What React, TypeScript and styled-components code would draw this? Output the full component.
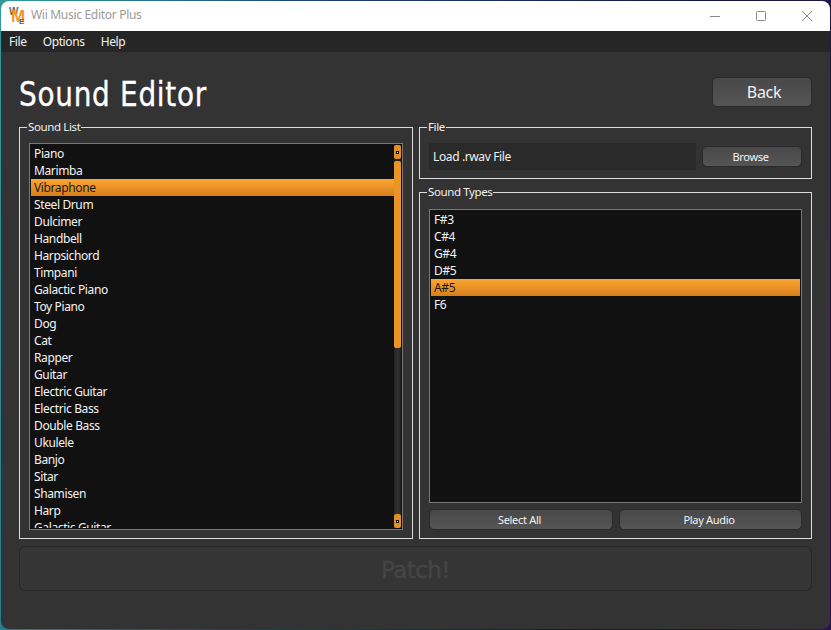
import React from "react";
import styled, { createGlobalStyle } from "styled-components";

const Global = createGlobalStyle`
  html, body { margin: 0; padding: 0; width: 831px; height: 630px; overflow: hidden; }
  body { background: linear-gradient(100deg, #2f9c9c 0%, #1c3f7c 35%, #15163f 75%, #2a1550 100%); font-family: "Noto Sans", "Open Sans", sans-serif; letter-spacing: -0.38px; }
`;
const Win = styled.div`
  box-sizing: border-box; margin: 1px 1px 0 1px; width: 829px; height: 628px;
  border-radius: 8px; overflow: hidden; background: #333; display: flex; flex-direction: column;
`;
const TitleBar = styled.div`
  height: 30px; background: #fff; display: flex; align-items: center; padding-left: 8px; flex: none;
`;
const TitleText = styled.span`
  margin-left: 3px; font-size: 12px; line-height: 28px; color: #9a9a9a; flex: 1; letter-spacing: -0.3px; padding-bottom: 2px;
`;
const WinBtn = styled.div`
  width: 46px; height: 30px; display: flex; align-items: center; justify-content: center;
`;
const MenuBar = styled.div`
  height: 21px; background: #262626; display: flex; padding-left: 8px; gap: 16px; align-items: center; flex: none;
`;
const MenuItem = styled.span`
  color: #f2f2f2; font-size: 12px; line-height: 21px;
`;
const Content = styled.div`
  flex: 1; padding: 25px 18px 0; display: flex; flex-direction: column; min-height: 0;
`;
const Header = styled.div`
  height: 43px; display: flex; justify-content: space-between; align-items: flex-start; flex: none;
`;
const Title = styled.h1`
  margin: 0; font-family: "DejaVu Sans", sans-serif; font-weight: 400; font-size: 34px; line-height: 34px;
  color: #fff; letter-spacing: 0.9px; transform: scaleX(0.82); transform-origin: left center; -webkit-text-stroke: 0.4px #fff;
`;
const Btn = styled.button<{ $w?: number; $h?: number; $fs?: number; $pl?: number; $pr?: number }>`
  box-sizing: border-box; width: ${p => (p.$w ? p.$w + "px" : "100%")}; height: ${p => p.$h ?? 21}px;
  border: 1px solid #2a2a2a; border-radius: 5px; background: linear-gradient(#484848, #555);
  color: #f2f2f2; font-family: inherit; font-size: ${p => p.$fs ?? 11}px; padding: 0 ${p => p.$pr ?? 3}px 0 ${p => p.$pl ?? 0}px; flex: none; letter-spacing: -0.3px;
`;
const Columns = styled.div`
  display: grid; grid-template-columns: 394px 393px; grid-template-rows: 419px; column-gap: 6px; height: 419px; flex: none;
`;
const Right = styled.div`
  display: flex; flex-direction: column; gap: 6px; min-height: 0; height: 419px;
`;
const Group = styled.fieldset<{ $h?: number }>`
  box-sizing: border-box; margin: 0; padding: 0 9px 8px; border: 1px solid #dcdcdc; min-width: 0; min-height: 0; overflow: hidden;
  ${p => p.$h ? `height: ${p.$h}px; flex: none;` : "flex: 1 1 0;"}
  display: flex; flex-direction: column;
`;
const Legend = styled.legend`
  margin-left: -2px; padding: 0 1px; font-size: 11.5px; line-height: 14px; color: #f0f0f0;
`;
const Inner = styled.div<{ $pt: number }>`
  padding-top: ${p => p.$pt}px; flex: 1 1 0; min-height: 0; display: flex; flex-direction: column; gap: 6px;
`;
const List = styled.div`
  box-sizing: border-box; flex: 1 1 0; min-height: 0; border: 1px solid #777; background: #111; display: flex;
  padding: 1px; overflow: hidden;
`;
const Rows = styled.div`
  flex: 1; min-width: 0; overflow: hidden;
`;
const Row = styled.div<{ $on?: boolean }>`
  height: 17px; line-height: 17px; padding-left: 3px; font-size: 12px; color: #f4f4f4; white-space: nowrap;
  background: ${p => (p.$on ? "linear-gradient(#fba632, #d77e1c)" : "transparent")};
  ${p => p.$on ? "color:#1a1a1a;" : ""}
`;
const Scroll = styled.div`
  width: 7px; display: flex; flex-direction: column; background: #222; flex: none;
`;
const ScrollCap = styled.div`
  height: 14px; background: #e58f22; border-radius: 2px; display: flex; align-items: center; justify-content: center; flex: none;
`;
const Dot = styled.div`
  width: 3px; height: 3px; background: #fff; border: 1px solid #000; box-sizing: border-box;
`;
const Thumb = styled.div`
  height: 187px; background: #ec9527; border-radius: 2px; margin-top: 2px; flex: none;
`;
const Spacer = styled.div`
  flex: 1; background: linear-gradient(90deg, #222, #333, #222);
`;
const FileRow = styled.div`
  display: flex; align-items: center; gap: 6px; height: 27px; flex: none;
`;
const Input = styled.div`
  flex: 1; height: 27px; line-height: 27px; background: #2a2a2a; color: #f0f0f0; font-size: 12px; padding-left: 4px; box-sizing: border-box;
`;
const Buttons = styled.div`
  display: grid; grid-template-columns: 184px 183px; column-gap: 6px; flex: none;
`;
const Patch = styled.button`
  box-sizing: border-box; margin-top: 7px; height: 45px; width: 100%; background: #353535; border: 1px solid #282828; flex: none;
  border-radius: 6px; color: #454545; font-family: "DejaVu Sans", sans-serif; font-size: 23px; padding: 2px 0 0; -webkit-text-stroke: 0.4px #454545;
  letter-spacing: -0.6px;
`;
const sounds = ["Piano","Marimba","Vibraphone","Steel Drum","Dulcimer","Handbell","Harpsichord","Timpani","Galactic Piano","Toy Piano","Dog","Cat","Rapper","Guitar","Electric Guitar","Electric Bass","Double Bass","Ukulele","Banjo","Sitar","Shamisen","Harp","Galactic Guitar"];
const types = ["F#3","C#4","G#4","D#5","A#5","F6"];

const Logo = () => (
  <svg width="19" height="20" viewBox="0 0 19 20" style={{ flex: "none" }}>
    <text x="0" y="9" fontSize="10" fontWeight="700" letterSpacing="-1" fontFamily="Liberation Sans" fill="#6b6350">W</text>
    <text x="2" y="16" fontSize="17" fontWeight="700" fontFamily="Liberation Sans" fill="#f0982a">M</text>
    <text x="10" y="18" fontSize="8" fontWeight="700" fontFamily="Liberation Sans" fill="#5c5c50">E</text>
  </svg>
);

export default function App() {
  return (
    <>
      <Global />
      <Win>
        <TitleBar>
          <Logo />
          <TitleText>Wii Music Editor Plus</TitleText>
          <WinBtn><svg width="10" height="10"><path d="M0 5.5H10" stroke="#888" /></svg></WinBtn>
          <WinBtn><svg width="10" height="10"><rect x=".5" y=".5" width="9" height="9" rx="1" fill="none" stroke="#888" /></svg></WinBtn>
          <WinBtn><svg width="10" height="10"><path d="M0 0L10 10M10 0L0 10" stroke="#888" /></svg></WinBtn>
        </TitleBar>
        <MenuBar><MenuItem>File</MenuItem><MenuItem>Options</MenuItem><MenuItem>Help</MenuItem></MenuBar>
        <Content>
          <Header>
            <Title>Sound Editor</Title>
            <Btn $w={100} $h={30} $fs={16} $pl={4} $pr={0}>Back</Btn>
          </Header>
          <Columns>
            <Group $h={419}>
              <Legend>Sound List</Legend>
              <Inner $pt={9}>
                <List>
                  <Rows>{sounds.map(s => <Row key={s} $on={s === "Vibraphone"}>{s}</Row>)}</Rows>
                  <Scroll>
                    <ScrollCap><Dot /></ScrollCap>
                    <Thumb />
                    <Spacer />
                    <ScrollCap><Dot /></ScrollCap>
                  </Scroll>
                </List>
              </Inner>
            </Group>
            <Right>
              <Group $h={59}>
                <Legend>File</Legend>
                <Inner $pt={9}>
                  <FileRow>
                    <Input>Load .rwav File</Input>
                    <Btn $w={100}>Browse</Btn>
                  </FileRow>
                </Inner>
              </Group>
              <Group>
                <Legend>Sound Types</Legend>
                <Inner $pt={10}>
                  <List>
                    <Rows>{types.map(s => <Row key={s} $on={s === "A#5"}>{s}</Row>)}</Rows>
                  </List>
                  <Buttons><Btn>Select All</Btn><Btn>Play Audio</Btn></Buttons>
                </Inner>
              </Group>
            </Right>
          </Columns>
          <Patch disabled>Patch!</Patch>
        </Content>
      </Win>
    </>
  );
}
